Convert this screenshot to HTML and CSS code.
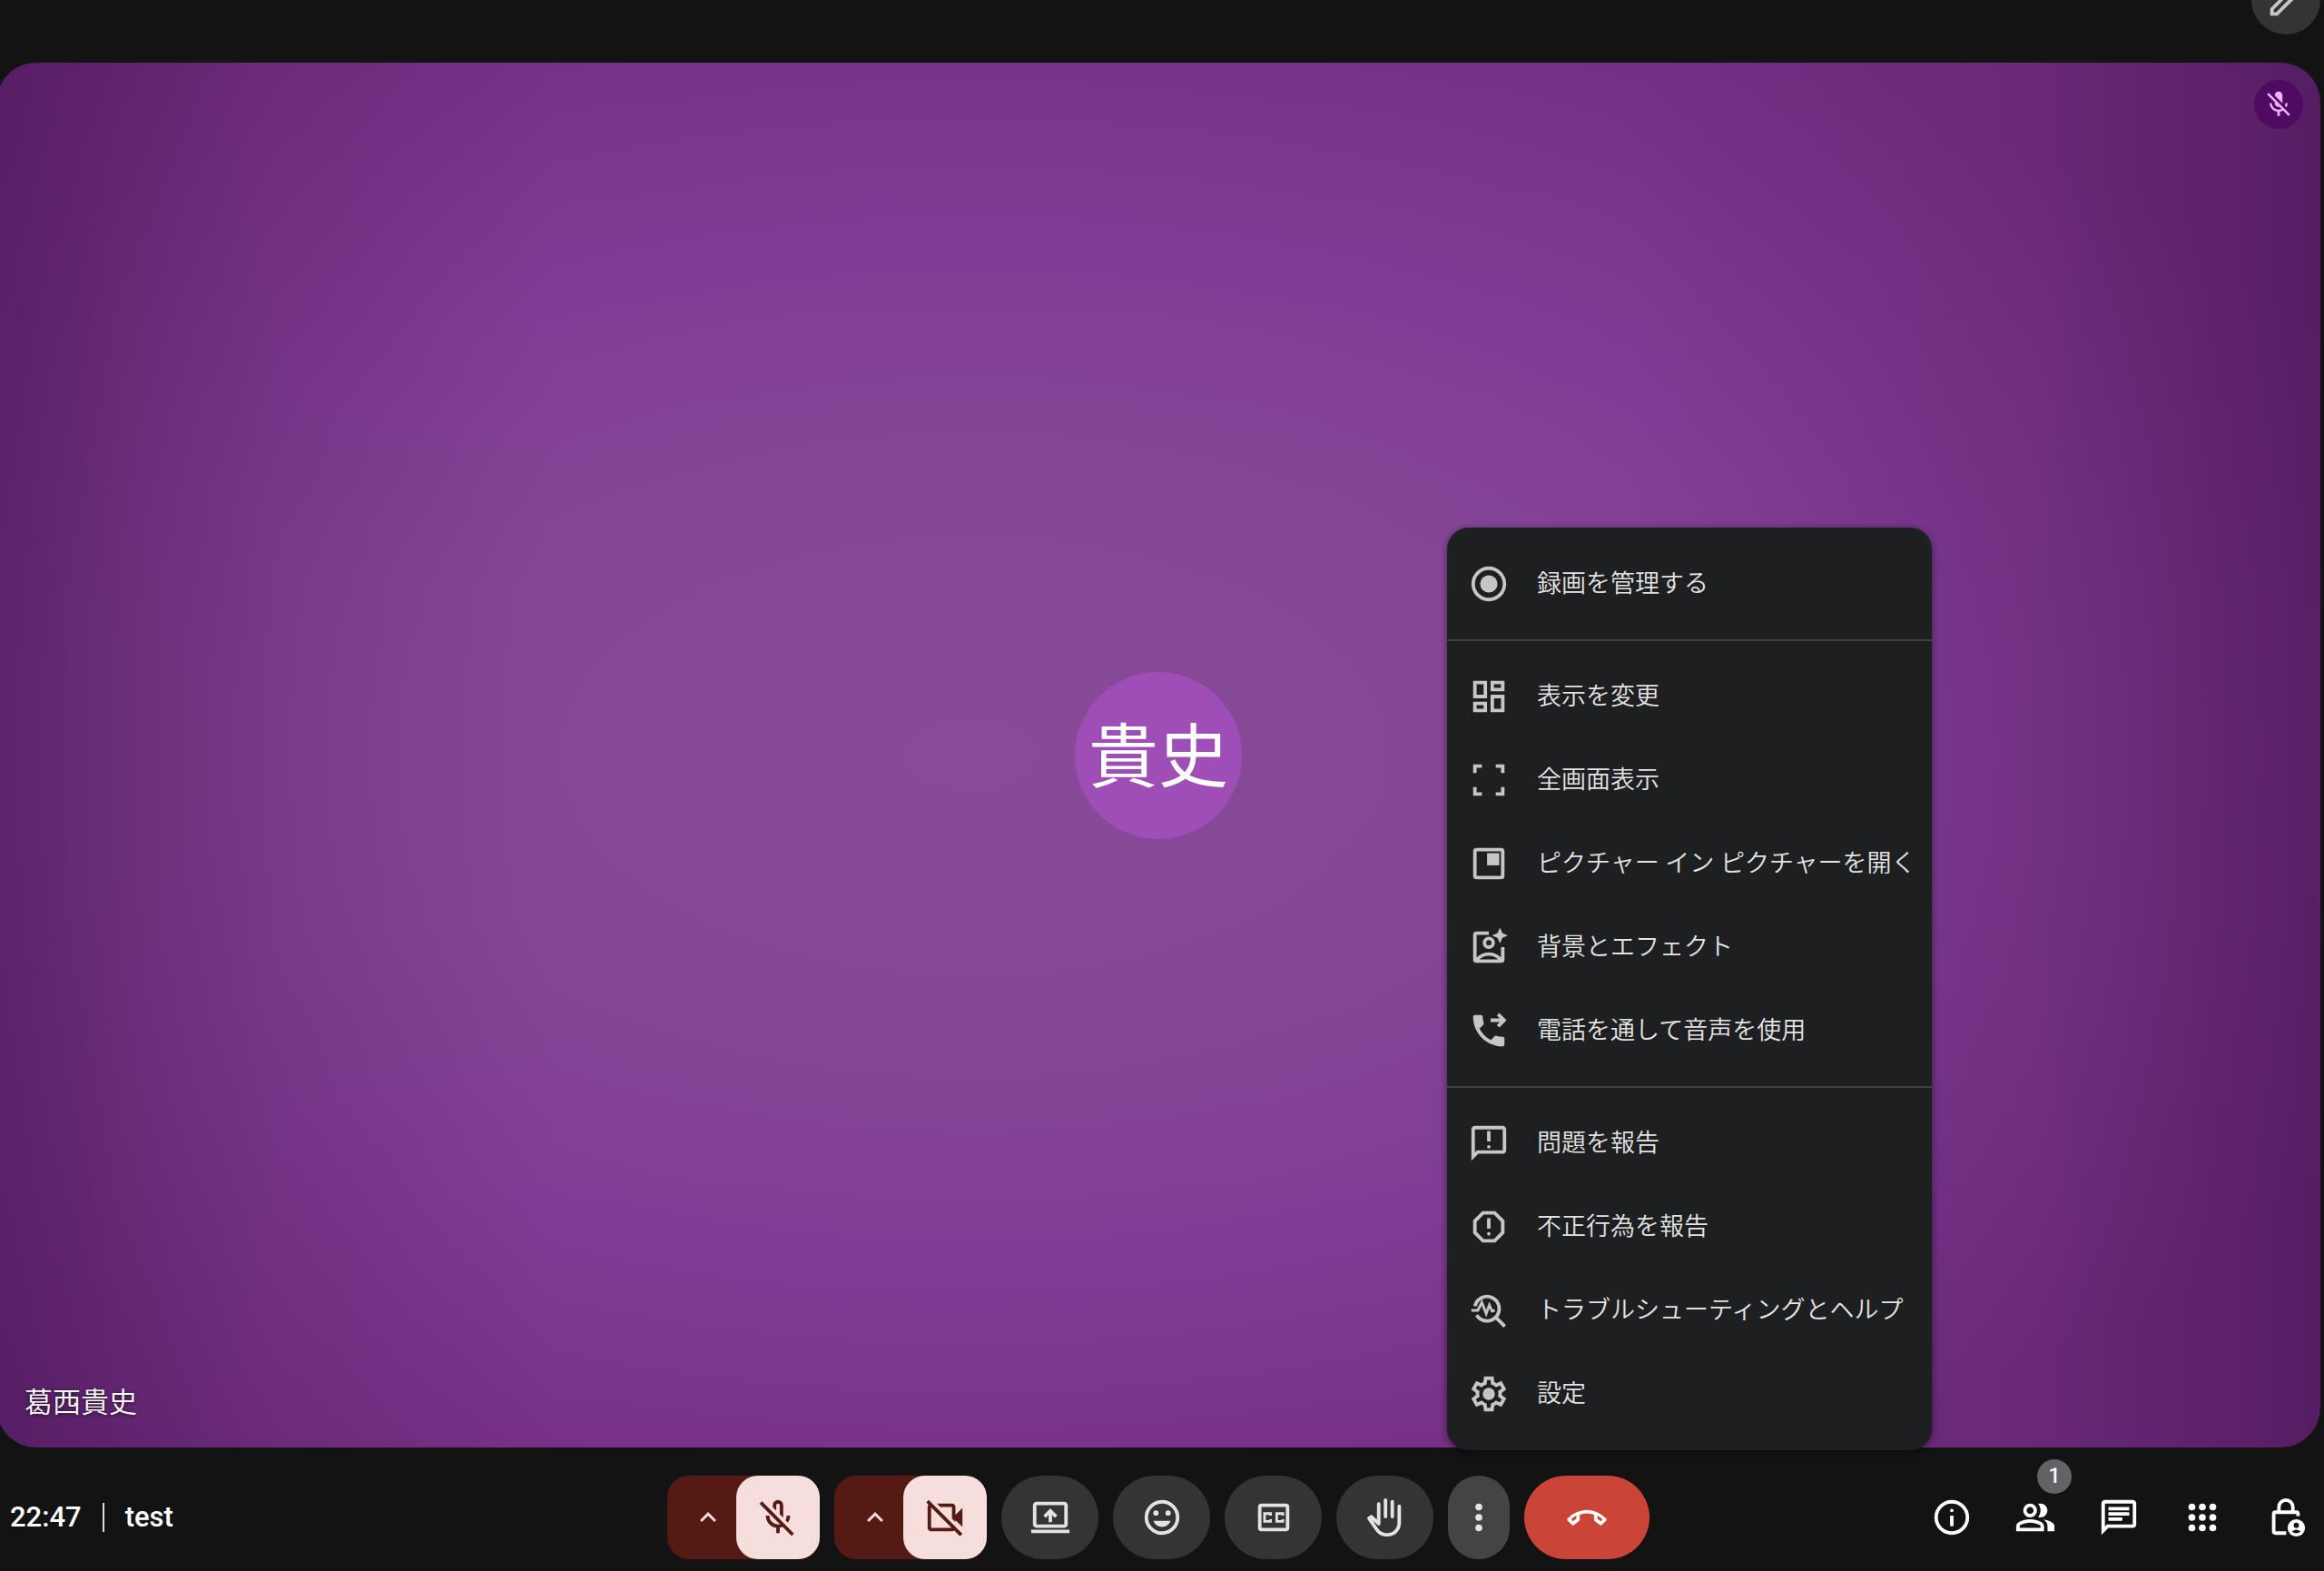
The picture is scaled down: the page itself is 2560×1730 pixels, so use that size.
FILE: index.html
```html
<!DOCTYPE html>
<html lang="ja">
<head>
  <meta charset="UTF-8" />
  <meta name="viewport" content="width=device-width, initial-scale=1.0"/>
  <title>test - Meet</title>
  <link rel="stylesheet" href="styles.css">
</head>
<body>
  <div class="meeting">
    <header class="top-bar">
      <button class="edit-btn" aria-label="編集">
        <svg class="icon" viewBox="0 0 24 24"><path fill-rule="evenodd" d="M5 19h1.4l9.8-9.8-1.4-1.4L5 17.6zM3 21v-4.2L16.2 3.6q.3-.3.7-.4t.8-.2.8.2.6.4l1.4 1.4q.3.3.4.7t.1.7-.1.8-.4.7L7.2 21z"/></svg>
      </button>
    </header>

    <main class="tile">
      <div class="tile-mic">
        <svg viewBox="0 0 24 24"><path d="M19 11h-1.7c0 .74-.16 1.43-.43 2.05l1.23 1.23c.56-.98.9-2.09.9-3.28zm-4.02.17c0-.06.02-.11.02-.17V5c0-1.66-1.34-3-3-3S9 3.34 9 5v.18l5.98 5.99zM4.27 3L3 4.27l6.01 6.01V11c0 1.66 1.33 3 2.99 3 .22 0 .44-.03.65-.08l1.66 1.66c-.71.33-1.5.52-2.31.52-2.76 0-5.3-2.1-5.3-5.1H5c0 3.41 2.72 6.23 6 6.72V21h2v-3.28c.91-.13 1.77-.45 2.54-.9L19.73 21 21 19.73 4.27 3z"/></svg>
      </div>
      <div class="avatar">貴史</div>
      <div class="tile-name">葛西貴史</div>
    </main>

    <footer class="bottom-bar">
      <div class="meeting-info">
        <span class="time">22:47</span>
        <span class="title">test</span>
      </div>

      <div class="controls">
        <div class="device">
          <button class="device-arrow" aria-label="音声の設定">
            <svg viewBox="0 0 24 24"><path d="M12 10.8l-4.6 4.6L6 14l6-6 6 6-1.4 1.4z"/></svg>
          </button>
          <button class="device-toggle" aria-label="マイクをオンにする">
            <svg class="icon" viewBox="0 0 24 24"><path d="m17.75 14.95-1.45-1.4q.35-.575.525-1.213Q17 11.7 17 11h2q0 1.1-.325 2.087-.325.988-.925 1.863Zm-2.95-3L13 10.15V5q0-.425-.287-.713Q12.425 4 12 4t-.712.287Q11 4.575 11 5v3.15l-2-2V5q0-1.25.875-2.125T12 2q1.25 0 2.125.875T15 5v6q0 .275-.062.5-.063.225-.138.45ZM11 21v-3.1q-2.6-.35-4.3-2.312Q5 13.625 5 11h2q0 2.075 1.463 3.537Q9.925 16 12 16q.85 0 1.613-.263.762-.262 1.387-.737l1.425 1.425q-.725.575-1.587.963-.863.387-1.838.512V21Zm8.8 1.6L1.4 4.2l1.4-1.4 18.4 18.4Z"/></svg>
          </button>
        </div>
        <div class="device">
          <button class="device-arrow" aria-label="ビデオの設定">
            <svg viewBox="0 0 24 24"><path d="M12 10.8l-4.6 4.6L6 14l6-6 6 6-1.4 1.4z"/></svg>
          </button>
          <button class="device-toggle" aria-label="カメラをオンにする">
            <svg class="icon" viewBox="0 0 24 24"><path d="M22 17.5l-4-4v1.2l-2-2V6H9.3l-2-2H16q.8 0 1.4.6T18 6v4.5l4-4zM20.6 22.8L1.2 3.4 2.6 2l19.4 19.4zM4 4l2 2H4v12h12l2 .1q0 .8-.6 1.3T16 20H4q-.8 0-1.4-.6T2 18V6q0-.8.6-1.4T4 4z"/></svg>
          </button>
        </div>
        <button class="control" aria-label="画面を共有">
          <svg class="icon" viewBox="0 0 24 24"><path fill-rule="evenodd" d="M4 3h16q.8 0 1.4.6T22 5v11q0 .8-.6 1.4T20 18H4q-.8 0-1.4-.6T2 16V5q0-.8.6-1.4T4 3zm0 2v11h16V5zM1 19h22v2H1zM11 14.7v-4.1l-1.6 1.6L8 10.8l4-4 4 4-1.4 1.4-1.6-1.6v4.1z"/></svg>
        </button>
        <button class="control" aria-label="リアクションを送信">
          <svg class="icon" viewBox="0 0 24 24"><circle class="line" cx="12" cy="12" r="9"/><circle cx="8.5" cy="9.5" r="1.5"/><circle cx="15.5" cy="9.5" r="1.5"/><path d="M7 14h10c-.9 2.2-2.8 3.5-5 3.5S7.9 16.2 7 14z"/></svg>
        </button>
        <button class="control" aria-label="字幕をオンにする">
          <svg class="icon" viewBox="0 0 24 24"><rect class="line" x="4" y="5" width="16" height="14" rx="1"/><path class="line thin" d="M10.25 11V9.75h-3.5v4.5h3.5V13M17.25 11V9.75h-3.5v4.5h3.5V13"/></svg>
        </button>
        <button class="control" aria-label="挙手する">
          <svg class="icon" viewBox="0 0 24 24"><path class="line round" d="M20 5.5V15c0 4-3 7-7 7-2.8 0-4.9-1.3-6.3-3.6l-4.1-5.9 1.3-.9 4.3 4V4.3M12.1 2v9.5M16 3v8.5"/></svg>
        </button>
        <div class="more">
          <button class="control more-btn" aria-label="その他のオプション">
            <svg class="icon" viewBox="0 0 24 24"><circle cx="12" cy="6" r="2"/><circle cx="12" cy="12" r="2"/><circle cx="12" cy="18" r="2"/></svg>
          </button>
          <div class="menu">
            <button class="menu-item">
              <svg class="icon" viewBox="0 0 24 24"><circle class="line" cx="12" cy="12" r="9"/><circle cx="12" cy="12" r="5"/></svg>
              <span>録画を管理する</span>
            </button>
            <hr>
            <button class="menu-item">
              <svg class="icon" viewBox="0 0 24 24"><path class="line" d="M4 4h6v8H4zM14 4h6v4h-6zM4 16h6v4H4zM14 12h6v8h-6z"/></svg>
              <span>表示を変更</span>
            </button>
            <button class="menu-item">
              <svg class="icon" viewBox="0 0 24 24"><path class="line" d="M4 8V4h4M16 4h4v4M20 16v4h-4M8 20H4v-4"/></svg>
              <span>全画面表示</span>
            </button>
            <button class="menu-item">
              <svg class="icon" viewBox="0 0 24 24"><rect class="line" x="4" y="4" width="16" height="16" rx="1"/><path d="M11 6h7v7h-7z"/></svg>
              <span>ピクチャー イン ピクチャーを開く</span>
            </button>
            <button class="menu-item">
              <svg class="icon" viewBox="0 0 24 24"><path class="line" d="M12 4H5q-1 0-1 1v14q0 1 1 1h14q1 0 1-1v-7M5 19.5c3.5-4.7 10.5-4.7 14 0"/><circle class="line" cx="12" cy="9.5" r="2.5"/><path d="M18.4.8l1.4 3.1 3.1 1.4-3.1 1.4-1.4 3.1L17 6.7l-3.1-1.4L17 3.9z"/></svg>
              <span>背景とエフェクト</span>
            </button>
            <button class="menu-item">
              <svg class="icon" viewBox="0 0 24 24"><path d="M6.62 10.79c1.44 2.83 3.76 5.14 6.59 6.59l2.2-2.2c.27-.27.67-.36 1.02-.24 1.12.37 2.33.57 3.57.57.55 0 1 .45 1 1V20c0 .55-.45 1-1 1-9.39 0-17-7.61-17-17 0-.55.45-1 1-1h3.5c.55 0 1 .45 1 1 0 1.25.2 2.45.57 3.57.11.35.03.74-.25 1.02l-2.2 2.2z"/><path class="line" d="M13 6h7.4M17.3 2.5L20.8 6l-3.5 3.5"/></svg>
              <span>電話を通して音声を使用</span>
            </button>
            <hr>
            <button class="menu-item">
              <svg class="icon" viewBox="0 0 24 24"><path d="M4 4h16v12H5.17L4 17.17V4m0-2c-1.1 0-2 .9-2 2v18l4-4h14c1.1 0 2-.9 2-2V4c0-1.1-.9-2-2-2H4zm7 3h2v6h-2z"/><circle cx="12" cy="14" r="1"/></svg>
              <span>問題を報告</span>
            </button>
            <button class="menu-item">
              <svg class="icon" viewBox="0 0 24 24"><path d="M15.73 3H8.27L3 8.27v7.46L8.27 21h7.46L21 15.73V8.27L15.73 3zM19 14.9L14.9 19H9.1L5 14.9V9.1L9.1 5h5.8L19 9.1v5.8zM11 7h2v6h-2z"/><circle cx="12" cy="16" r="1"/></svg>
              <span>不正行為を報告</span>
            </button>
            <button class="menu-item">
              <svg class="icon" viewBox="0 0 24 24"><path class="line" d="M4.1 9.6A7 7 0 1 1 5 14.7M16 16l5.2 5.2"/><path class="line thin" d="M2 12h3.7L8 7.5l2.5 6.4 1.8-5 1.5 3.5 1.6-.4"/></svg>
              <span>トラブルシューティングとヘルプ</span>
            </button>
            <button class="menu-item">
              <svg class="icon" viewBox="0 0 24 24"><path fill-rule="evenodd" d="M9.25 22l-.4-3.2q-.325-.125-.612-.3-.288-.175-.563-.375L4.7 19.375l-2.75-4.75 2.575-1.95Q4.5 12.5 4.5 12.337v-.675q0-.162.025-.337L1.95 9.375l2.75-4.75 2.975 1.25q.275-.2.575-.375.3-.175.6-.3l.4-3.2h5.5l.4 3.2q.325.125.613.3.287.175.562.375l2.975-1.25 2.75 4.75-2.575 1.95q.025.175.025.337v.675q0 .163-.05.338l2.575 1.95-2.75 4.75-2.95-1.25q-.275.2-.575.375-.3.175-.6.3l-.4 3.2ZM11 20h1.975l.35-2.65q.775-.2 1.438-.588.662-.387 1.212-.937l2.475 1.025.975-1.7-2.15-1.625q.125-.35.175-.738Q17.5 12.4 17.5 12t-.05-.787q-.05-.388-.175-.738l2.15-1.625-.975-1.7-2.475 1.05q-.55-.575-1.212-.963-.663-.387-1.438-.587L13 4h-1.975l-.35 2.65q-.775.2-1.437.587-.663.388-1.213.938L5.55 7.15l-.975 1.7 2.15 1.6q-.125.375-.175.75-.05.375-.05.8 0 .4.05.775.05.375.175.75l-2.15 1.625.975 1.7 2.475-1.05q.55.575 1.213.962.662.388 1.437.588Z"/><circle cx="12" cy="12" r="3.5"/></svg>
              <span>設定</span>
            </button>
          </div>
        </div>
        <button class="control end-btn" aria-label="通話から退出">
          <svg class="icon" viewBox="0 0 24 24"><path fill-rule="evenodd" d="M3.3 16.2L1 13.9q-.3-.3-.3-.7t.3-.7q2.2-2.3 5.1-3.5T12 7.7t5.9 1.3 5.1 3.5q.3.3.3.7t-.3.7l-2.3 2.3q-.3.3-.6.3t-.7-.2l-2.9-2.2q-.2-.2-.3-.4t-.1-.4v-2.9q-.9-.3-1.9-.5T12 9.7t-2.2.2-1.9.5v2.9q0 .2-.1.4t-.3.4l-2.9 2.2q-.3.2-.7.2t-.6-.3zM6 11q-.8.4-1.5.9T3 13.2l1 1 2-1.6zm12 .1v1.5l2 1.6 1-1q-.8-.8-1.5-1.3T18 11.1z"/></svg>
        </button>
      </div>

      <nav class="panels">
        <button class="panel-btn" aria-label="会議の詳細">
          <svg class="icon" viewBox="0 0 24 24"><circle class="line" cx="12" cy="12" r="9"/><path d="M11 11h2v6h-2z"/><circle cx="12" cy="8" r="1"/></svg>
        </button>
        <button class="panel-btn" aria-label="ユーザー">
          <svg class="icon" viewBox="0 0 24 24"><path fill-rule="evenodd" d="M1 20v-2.8q0-.85.438-1.563.437-.712 1.162-1.087 1.55-.775 3.15-1.163Q7.35 13 9 13t3.25.387q1.6.388 3.15 1.163.725.375 1.162 1.087Q17 16.35 17 17.2V20Zm18 0v-3q0-1.1-.612-2.113-.613-1.012-1.738-1.737 1.275.15 2.4.512 1.125.363 2.1.888.9.5 1.375 1.112Q23 16.275 23 17v3ZM9 12q-1.65 0-2.825-1.175Q5 9.65 5 8q0-1.65 1.175-2.825Q7.35 4 9 4q1.65 0 2.825 1.175Q13 6.35 13 8q0 1.65-1.175 2.825Q10.65 12 9 12Zm10-4q0 1.65-1.175 2.825Q16.65 12 15 12q-.275 0-.7-.062-.425-.063-.7-.138.675-.8 1.037-1.775Q15 9.05 15 8q0-1.05-.363-2.025Q14.275 5 13.6 4.2q.35-.125.7-.163Q14.65 4 15 4q1.65 0 2.825 1.175Q19 6.35 19 8ZM3 18h12v-.8q0-.275-.137-.5-.138-.225-.363-.35-1.35-.675-2.725-1.013Q10.4 15 9 15t-2.775.337Q4.85 15.675 3.5 16.35q-.225.125-.362.35-.138.225-.138.5Zm6-8q.825 0 1.413-.588Q11 8.825 11 8t-.587-1.412Q9.825 6 9 6q-.825 0-1.412.588Q7 7.175 7 8t.588 1.412Q8.175 10 9 10Z"/></svg>
          <span class="badge">1</span>
        </button>
        <button class="panel-btn" aria-label="チャット">
          <svg class="icon" viewBox="0 0 24 24"><path d="M4 4h16v12H5.17L4 17.17V4m0-2c-1.1 0-2 .9-2 2v18l4-4h14c1.1 0 2-.9 2-2V4c0-1.1-.9-2-2-2H4zm2 10h8v2H6v-2zm0-3h12v2H6V9zm0-3h12v2H6V6z"/></svg>
        </button>
        <button class="panel-btn" aria-label="ツール">
          <svg class="icon" viewBox="0 0 24 24"><circle cx="6" cy="6" r="2"/><circle cx="12" cy="6" r="2"/><circle cx="18" cy="6" r="2"/><circle cx="6" cy="12" r="2"/><circle cx="12" cy="12" r="2"/><circle cx="18" cy="12" r="2"/><circle cx="6" cy="18" r="2"/><circle cx="12" cy="18" r="2"/><circle cx="18" cy="18" r="2"/></svg>
        </button>
        <button class="panel-btn" aria-label="主催者用ボタン">
          <svg class="icon" viewBox="0 0 24 24"><path class="line" d="M12.2 21H6q-1 0-1-1V10q0-1 1-1h12q1 0 1 1v1.2M8 9V6a4 4 0 0 1 8 0v3"/><circle cx="18" cy="18" r="5"/><circle class="hole" cx="18" cy="16.5" r="1.5"/><path class="hole" d="M15.5 20.1q2.5-2.2 5 0-2.5 2-5 0z"/></svg>
        </button>
      </nav>
    </footer>
  </div>
</body>
</html>
```

FILE: styles.css
```css
* {
  box-sizing: border-box;
}

body {
  margin: 0;
  background: #131313;
  color: white;
  font-family: Roboto, "Noto Sans CJK JP", sans-serif;
  overflow: hidden;
}

button {
  border: none;
  padding: 0;
  margin: 0;
  background: none;
  color: inherit;
  font: inherit;
  cursor: pointer;
}

svg {
  display: block;
  fill: currentColor;
  flex: none;
}

.icon {
  width: 46px;
  height: 46px;
}

.line {
  fill: none;
  stroke: currentColor;
  stroke-width: 2;
}

.thin {
  stroke-width: 1.5;
}

.round {
  stroke-linecap: round;
  stroke-linejoin: round;
}

.hole {
  fill: #131313;
}

/* the call area hangs slightly over the left edge of the window */
.meeting {
  display: flex;
  flex-direction: column;
  min-height: 100vh;
  margin: 0 4px 0 -4px;
}

.top-bar {
  display: flex;
  justify-content: flex-end;
  height: 69px;
}

.edit-btn {
  display: flex;
  align-items: center;
  justify-content: center;
  width: 76px;
  height: 76px;
  margin-top: -38px;
  border-radius: 50%;
  background: #333436;
  color: #c4c7c5;
}

.tile {
  flex: 1;
  position: relative;
  display: flex;
  align-items: center;
  justify-content: center;
  border-radius: 44px;
  background:
    linear-gradient(to right,
      rgba(60, 16, 72, 0.52) 0%,
      rgba(60, 16, 72, 0.32) 6%,
      rgba(60, 16, 72, 0.16) 12%,
      rgba(60, 16, 72, 0) 24%,
      rgba(60, 16, 72, 0) 70%,
      rgba(60, 16, 72, 0.1) 82%,
      rgba(60, 16, 72, 0.18) 88%,
      rgba(60, 16, 72, 0.34) 94%,
      rgba(60, 16, 72, 0.54) 100%),
    radial-gradient(ellipse 68% 60% at 42% 50%, #874b99 0%, #854797 35%, #803c94 60%, #783289 85%, #722d82 100%);
}

.tile-mic {
  position: absolute;
  top: 19px;
  right: 19px;
  display: flex;
  align-items: center;
  justify-content: center;
  width: 54px;
  height: 54px;
  border-radius: 50%;
  background: #4f0a62;
  color: #efb0ff;
}

.tile-mic svg {
  width: 34px;
  height: 34px;
}

.avatar {
  display: flex;
  align-items: center;
  justify-content: center;
  width: 184px;
  height: 184px;
  padding-top: 8px;
  border-radius: 50%;
  background: #9f4eb7;
  font-size: 77px;
  line-height: 1;
}

.tile-name {
  position: absolute;
  left: 31px;
  bottom: 26px;
  font-size: 31px;
  font-weight: 350;
  line-height: 46px;
  text-shadow: 0 1px 4px rgba(0, 0, 0, 0.6);
}

.bottom-bar {
  display: grid;
  grid-template-columns: 1fr auto 1fr;
  align-items: center;
  padding: 31px 0 13px;
}

.meeting-info {
  display: flex;
  align-items: center;
  padding-left: 15px;
  font-size: 31px;
  font-weight: 500;
  line-height: 32px;
}

.time {
  padding-right: 23px;
  border-right: 2px solid #dadce0;
}

.title {
  padding-left: 23px;
}

.controls {
  display: flex;
  gap: 16px;
}

.device {
  display: flex;
  width: 168px;
  border-radius: 24px;
  background: #561a14;
  color: #f5dedc;
}

.device-arrow {
  width: 76px;
  padding-left: 27px;
}

.device-arrow svg {
  width: 36px;
  height: 36px;
}

.device-toggle {
  display: flex;
  align-items: center;
  justify-content: center;
  width: 92px;
  height: 92px;
  border-radius: 24px;
  background: #f5dedc;
  color: #561a14;
}

.control {
  display: flex;
  align-items: center;
  justify-content: center;
  width: 107px;
  height: 92px;
  border-radius: 46px;
  background: #333436;
  color: #e3e3e3;
}

.more {
  position: relative;
}

.more-btn {
  width: 68px;
  background: #434446;
}

.end-btn {
  width: 138px;
  background: #cb4438;
  color: white;
}

.menu {
  position: absolute;
  left: -1px;
  bottom: calc(100% + 28px);
  width: 534px;
  padding: 16px 0;
  border-radius: 24px;
  background: #1e1f20;
  box-shadow: 0 2px 8px rgba(0, 0, 0, 0.5);
}

.menu hr {
  height: 2px;
  margin: 15px 0;
  border: none;
  background: #3f4142;
}

.menu-item {
  display: flex;
  align-items: center;
  gap: 30px;
  width: 100%;
  height: 92px;
  padding: 0 23px;
  color: #c4c7c5;
  font-size: 27px;
  font-weight: 350;
  line-height: 40px;
  text-align: left;
  white-space: nowrap;
}

.menu-item span {
  color: #e3e3e3;
}

.panels {
  display: flex;
  justify-content: flex-end;
  margin-right: -8px;
}

.panel-btn {
  position: relative;
  display: flex;
  align-items: center;
  justify-content: center;
  width: 92px;
  height: 92px;
}

.badge {
  position: absolute;
  top: -18px;
  right: 6px;
  width: 38px;
  height: 38px;
  border-radius: 50%;
  background: #626267;
  font-size: 23px;
  font-weight: 500;
  line-height: 38px;
  text-align: center;
}
```
